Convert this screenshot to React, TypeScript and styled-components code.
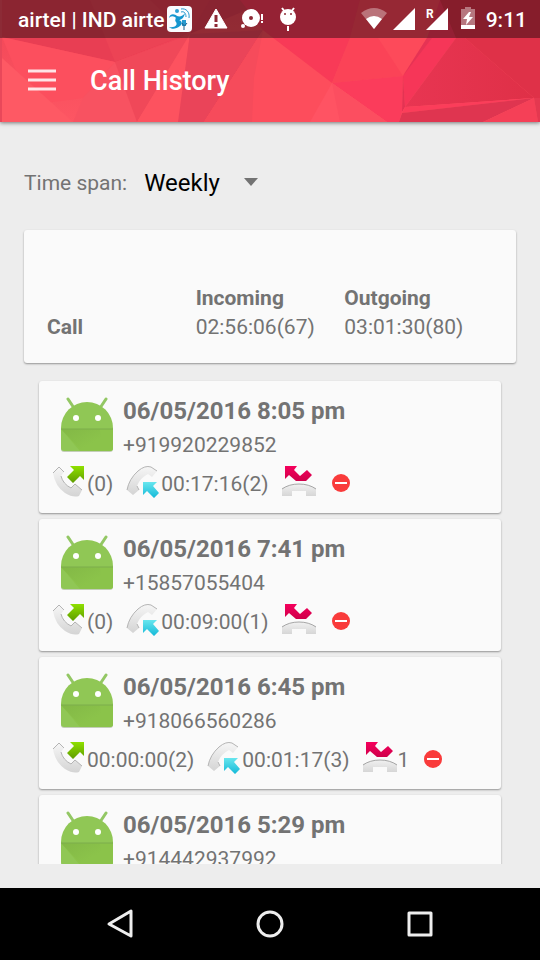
import React from "react";
import styled, { createGlobalStyle } from "styled-components";

const GlobalStyle = createGlobalStyle`
  * { box-sizing: border-box; }
  body {
    margin: 0;
    background: #ededed;
    font-family: Roboto, "Noto Sans", sans-serif;
    color: #737373;
  }
`;

const Screen = styled.div`
  display: flex;
  flex-direction: column;
  height: 100vh;
`;

const AppHeader = styled.header`
  position: relative;
  z-index: 1;
  flex: none;
  color: #fff;
  box-shadow: 0 1px 4px rgba(0, 0, 0, 0.5);
`;

const HeaderArt = styled.svg`
  position: absolute;
  inset: 0;
  width: 100%;
  height: 100%;
`;

const StatusBar = styled.div`
  position: relative;
  display: flex;
  align-items: center;
  justify-content: space-between;
  height: 38px;
  padding: 0 13px 0 18px;
  background: rgba(0, 0, 0, 0.4);
  font-size: 21px;
  line-height: 28px;
  font-weight: 500;
  white-space: nowrap;
`;

const StatusGroup = styled.div`
  display: flex;
  align-items: center;
`;

const StatusIcon = styled.svg<{ $width: number }>`
  flex: none;
  width: ${(p) => p.$width}px;
  height: 38px;
`;

const Carrier = styled.span`
  padding-top: 2px;
`;

const Clock = styled.time`
  margin-left: 4px;
  padding-top: 2px;
`;

const Toolbar = styled.div`
  position: relative;
  display: flex;
  align-items: center;
  gap: 34px;
  height: 84px;
  padding: 0 28px;
`;

const IconButton = styled.button`
  display: flex;
  align-items: center;
  justify-content: center;
  padding: 0;
  border: 0;
  background: none;
  color: inherit;
  cursor: pointer;
`;

const Title = styled.h1`
  margin: 0;
  padding-top: 2px;
  font-size: 27px;
  line-height: 36px;
  font-weight: 500;
`;

const Main = styled.main`
  display: flex;
  flex-direction: column;
  flex: 1;
  min-height: 0;
  padding: 24px;
`;

const SpanRow = styled.div`
  display: flex;
  align-items: center;
  flex: none;
  gap: 17px;
  height: 74px;
  margin-bottom: 10px;
`;

const SpanLabel = styled.label`
  font-size: 21px;
  line-height: 28px;
`;

const SelectBox = styled.div`
  display: grid;
  align-items: center;
  width: 120px;

  & > * { grid-area: 1 / 1; }
`;

const SpanSelect = styled.select`
  appearance: none;
  width: 100%;
  height: 48px;
  padding: 0;
  border: 0;
  background: transparent;
  color: #000;
  font-family: inherit;
  font-size: 24px;
`;

const Arrow = styled.svg`
  justify-self: end;
  width: 20px;
  height: 10px;
  pointer-events: none;
`;

const Card = styled.div`
  border-radius: 3px;
  background: #fafafa;
  box-shadow: 0 1px 2px rgba(0, 0, 0, 0.38);
`;

const SummaryCard = styled(Card)`
  flex: none;
  padding: 54px 23px 21px;
`;

const SummaryTable = styled.table`
  width: 100%;
  table-layout: fixed;
  border-collapse: collapse;
  font-size: 21px;
  line-height: 29px;
  text-align: left;

  th, td { padding: 0; }
  th { font-weight: 700; }
`;

const CallList = styled.ul`
  flex: 1;
  min-height: 0;
  margin: 16px 0 0;
  padding: 2px 15px;
  overflow-y: auto;
  scrollbar-width: none;
  list-style: none;
`;

const CallCard = styled(Card).attrs({ as: "li" })`
  margin-bottom: 6px;
  padding: 12px 12px 6px;
`;

const Contact = styled.div`
  display: flex;
`;

const Avatar = styled.svg`
  flex: none;
  width: 54px;
  height: 60px;
  margin: 4px 9px;
`;

const When = styled.div`
  font-size: 24px;
  line-height: 36px;
  font-weight: 700;
`;

const Phone = styled.div`
  font-size: 21px;
  line-height: 32px;
`;

const Stats = styled.div`
  display: flex;
  align-items: center;
  gap: 12px;
  height: 46px;
  font-size: 21px;
  line-height: 36px;
`;

const Stat = styled.span`
  display: flex;
  align-items: center;
`;

const StatIcon = styled.svg`
  width: 36px;
  height: 36px;
`;

const BlockIcon = styled.svg`
  width: 24px;
  height: 24px;
`;

const NavBar = styled.nav`
  display: flex;
  align-items: center;
  justify-content: center;
  flex: none;
  gap: 102px;
  height: 72px;
  background: #000;
  color: #eee;

  svg { width: 48px; height: 48px; }
`;

const Facets = () => (
  <HeaderArt viewBox="0 0 540 122" preserveAspectRatio="none" aria-hidden="true">
    <defs>
      <linearGradient id="base" x1="0" y1="0" x2="0" y2="1">
        <stop offset="0" stopColor="#f04455" />
        <stop offset="1" stopColor="#fd5663" />
      </linearGradient>
      <linearGradient id="right" x1="0" y1="0" x2="1" y2="0">
        <stop offset="0" stopColor="#e83552" />
        <stop offset="1" stopColor="#df3047" />
      </linearGradient>
    </defs>
    <rect width="540" height="122" fill="url(#base)" />
    <path d="M0 0H250L178 38L115 62L2 37Z" fill="#e83e53" />
    <path d="M90 0H150L187 34L115 62Z" fill="#ec4355" />
    <path d="M2 37L115 62L83 98L30 105Z" fill="#fc4f5e" />
    <path d="M2 58L73 122H2Z" fill="#fe5964" />
    <path d="M115 62L83 98L73 122H138Z" fill="#f85261" />
    <path d="M115 62L190 34L137 122Z" fill="#f04859" />
    <path d="M115 62L180 38L270 0H210L190 34Z" fill="#e53c53" />
    <path d="M190 34L137 122H178Z" fill="#fd525f" />
    <path d="M190 34L263 30L204 122H178Z" fill="#ea4459" />
    <path d="M263 30L204 122H387L332 83Z" fill="#fd4d5c" />
    <path d="M263 30L254 78L252 122H204Z" fill="#f64b5b" />
    <path d="M240 0H360L350 38L332 83L263 30Z" fill="#f83a57" />
    <path d="M350 38L360 0H445L403 76L332 83Z" fill="#fb4357" />
    <path d="M378 38L403 76L427 38Z" fill="#fd4a5a" />
    <path d="M332 83L403 76L402 112L399 122H387Z" fill="#fb3c5b" />
    <path d="M332 83L310 122H387Z" fill="#ff5363" />
    <path d="M332 83L340 122H387Z" fill="#fc4e60" />
    <path d="M403 76L427 38L440 0H480L456 38L405 107Z" fill="#f63658" />
    <path d="M403 76L427 38L432 38Z" fill="#e63354" />
    <path d="M403 76L405 107L402 112Z" fill="#e43253" />
    <path d="M456 38L405 107L534 98L465 38Z" fill="url(#right)" />
    <path d="M456 38L440 0H540V98H534L465 38Z" fill="#df3148" />
    <path d="M405 107L534 98L402 113Z" fill="#fb3d5a" />
    <path d="M402 113L534 98L483 122H399Z" fill="#df3550" />
    <path d="M534 98L483 122H538Z" fill="#f54057" />
    <path d="M534 98H540V122H538Z" fill="#e43850" />
    <path d="M0 0H2V122H0Z" fill="#e9485a" />
  </HeaderArt>
);

const NotificationIcons = () => (
  <>
    <StatusIcon $width={33} viewBox="3 0 33 38" aria-hidden="true">
      <rect x="5" y="6" width="25" height="26" rx="4" fill="#fafcff" />
      <circle cx="15" cy="11" r="2" fill="#2b9fd4" />
      <path d="M7 18C8 13 13 14 15 16C18 17 21 16 23 13C22 18 19 20 17 20C20 21 21 24 18 26C14 29 10 30 7 27C13 28 16 25 14 22C12 20 15 18 13 17Q9 15 7 18Z" fill="#1295cf" />
      <path d="M19 12C22 11 24 13 24 17M19 9C24 8 28 12 27 18" fill="none" stroke="#2499cf" strokeWidth="1" />
      <path d="M22 20V26" stroke="#2499cf" strokeWidth="4" />
      <path d="M20 23Q22 28 25 23M22 26V30" fill="none" stroke="#1d5f8a" />
    </StatusIcon>
    <StatusIcon $width={36} viewBox="0 0 36 38" aria-hidden="true">
      <path d="M18 9L29 28H7Z" fill="#fff" stroke="#fff" strokeLinejoin="round" />
      <path d="M18 15V22M18 24V27" stroke="#8d2834" strokeWidth="3" />
    </StatusIcon>
    <StatusIcon $width={36} viewBox="0 0 36 38" aria-hidden="true">
      <circle cx="17" cy="18" r="9" fill="#fff" />
      <circle cx="17" cy="18" r="2" fill="#8d2834" />
      <circle cx="9" cy="26" r="2" fill="#fff" />
      <path d="M28 14V20M28 21V23" stroke="#fff" strokeWidth="2" />
    </StatusIcon>
    <StatusIcon $width={36} viewBox="0 0 36 38" aria-hidden="true">
      <circle cx="18" cy="17" r="8" fill="#fff" />
      <path d="M12 8L15 12M24 8L21 12M18 26V31" stroke="#fff" strokeWidth="2" />
      <circle cx="15" cy="14" r="1" fill="#8d2834" />
      <circle cx="21" cy="14" r="1" fill="#8d2834" />
    </StatusIcon>
  </>
);

const SystemIcons = () => (
  <>
    <StatusIcon $width={32} viewBox="0 0 32 38" aria-hidden="true">
      <path d="M3 13Q16 3 29 13L16 29Z" fill="#fff" opacity="0.35" />
      <path d="M8 19Q16 13 24 19L16 29Z" fill="#fff" />
    </StatusIcon>
    <StatusIcon $width={30} viewBox="0 0 30 38" aria-hidden="true">
      <path d="M25 8V30H3Z" fill="#fff" />
    </StatusIcon>
    <StatusIcon $width={34} viewBox="0 0 34 38" aria-hidden="true">
      <path d="M28 8V30H6Z" fill="#fff" />
      <text x="6" y="18" fill="#fff" fontSize="12" fontWeight="700">R</text>
    </StatusIcon>
    <StatusIcon $width={28} viewBox="0 0 28 38" aria-hidden="true">
      <path d="M7 9H11V7H17V9H21V26H7Z" fill="#fff" opacity="0.4" />
      <path d="M7 25H21V29H7Z" fill="#fff" />
      <path d="M15 12L9 19H13L12 25L19 17H15L17 12Z" fill="#fff" />
    </StatusIcon>
  </>
);

const IconPaint = ({ id, from, to }: { id: string; from: string; to: string }) => (
  <linearGradient id={id} x1="0" y1="0" x2="0" y2="1">
    <stop offset="0" stopColor={from} />
    <stop offset="1" stopColor={to} />
  </linearGradient>
);

const AndroidAvatar = () => (
  <Avatar viewBox="0 0 54 60" role="img" aria-label="Contact">
    <defs>
      <linearGradient id="fold" x1="0" y1="0" x2="1" y2="1">
        <stop offset="0" stopColor="#7aad42" />
        <stop offset="0.7" stopColor="#8bc34a" />
      </linearGradient>
    </defs>
    <path d="M1 50V52Q1 55 4 55H50Q53 55 53 52V50Z" fill="#c3cdb8" />
    <path d="M8 2L14 11M46 2L40 11" stroke="#93c764" strokeWidth="3" strokeLinecap="round" />
    <path d="M1 31A26 26 0 0 1 53 31V51Q53 54 50 54H4Q1 54 1 51Z" fill="#90c755" />
    <path d="M1 32H53V51Q53 54 50 54H20Z" fill="#8bc34a" />
    <path d="M1 32H40L42 54H22Z" fill="url(#fold)" opacity="0.5" />
    <path d="M1 32H53" stroke="#7cad4d" />
    <circle cx="16" cy="21" r="3" fill="#fff" />
    <circle cx="38" cy="21" r="3" fill="#fff" />
  </Avatar>
);

const IncomingIcon = () => (
  <StatIcon viewBox="0 0 36 36" role="img" aria-label="Incoming">
    <defs>
      <IconPaint id="lime" from="#8fe000" to="#5f9c00" />
      <IconPaint id="handsetA" from="#f6f6f6" to="#d4d4d4" />
    </defs>
    <path d="M2 7L8 1L13 6L10 10Q12 18 20 22L24 18L31 24L28 30Q22 32 14 27Q4 20 2 7Z" fill="url(#handsetA)" />
    <path d="M2 7L8 1L13 6M10 10Q12 18 20 22L24 18L31 24" fill="none" stroke="#b4b4b4" />
    <path d="M19 0H33V14L29 10L22 17L16 11L23 4Z" fill="url(#lime)" />
  </StatIcon>
);

const OutgoingIcon = () => (
  <StatIcon viewBox="0 0 36 36" role="img" aria-label="Outgoing">
    <defs>
      <IconPaint id="cyan" from="#68e6ee" to="#14b9d8" />
      <IconPaint id="handsetB" from="#f6f6f6" to="#d4d4d4" />
    </defs>
    <path d="M2 24Q4 13 13 5Q20 -1 26 1L32 5L27 11L23 8Q15 12 12 20L14 24L8 29Z" fill="url(#handsetB)" />
    <path d="M2 24Q4 13 13 5Q20 -1 26 1L32 5" fill="none" stroke="#b4b4b4" />
    <path d="M12 20L14 24" stroke="#b4b4b4" />
    <path d="M18 16H32L28 20L34 27L29 32L22 25L18 29Z" fill="url(#cyan)" />
  </StatIcon>
);

const MissedIcon = () => (
  <StatIcon viewBox="0 0 36 36" role="img" aria-label="Missed">
    <defs>
      <IconPaint id="crimson" from="#f5005c" to="#cf004a" />
      <IconPaint id="handsetC" from="#f1f1f1" to="#d6d6d6" />
    </defs>
    <path d="M1 30V22Q8 18 18 18Q28 18 35 22V30H25V25H11V30Z" fill="url(#handsetC)" />
    <path d="M1 23Q8 18 18 18Q28 18 35 23" fill="none" stroke="#a6a6a6" />
    <path d="M4 0H16L13 4L19 10L26 4L31 9L25 15H15L8 9L4 13Z" fill="url(#crimson)" />
  </StatIcon>
);

const NoEntryIcon = () => (
  <BlockIcon viewBox="0 0 24 24" aria-hidden="true">
    <circle cx="12" cy="11" r="9" fill="#f93b3b" />
    <rect x="6" y="10" width="12" height="2" fill="#fff" />
  </BlockIcon>
);

type Call = {
  when: string;
  phone: string;
  incoming?: string;
  outgoing?: string;
  missed?: string;
};

const calls: Call[] = [
  { when: "06/05/2016 8:05 pm", phone: "+919920229852", incoming: "(0)", outgoing: "00:17:16(2)" },
  { when: "06/05/2016 7:41 pm", phone: "+15857055404", incoming: "(0)", outgoing: "00:09:00(1)" },
  { when: "06/05/2016 6:45 pm", phone: "+918066560286", incoming: "00:00:00(2)", outgoing: "00:01:17(3)", missed: "1" },
  { when: "06/05/2016 5:29 pm", phone: "+914442937992" },
];

const CallItem = ({ call }: { call: Call }) => (
  <CallCard>
    <Contact>
      <AndroidAvatar />
      <div>
        <When>{call.when}</When>
        <Phone>{call.phone}</Phone>
      </div>
    </Contact>
    <Stats>
      <Stat><IncomingIcon />{call.incoming}</Stat>
      <Stat><OutgoingIcon />{call.outgoing}</Stat>
      <Stat><MissedIcon />{call.missed}</Stat>
      <IconButton type="button" aria-label="Block number"><NoEntryIcon /></IconButton>
    </Stats>
  </CallCard>
);

export default function App() {
  return (
    <Screen>
      <GlobalStyle />
      <AppHeader>
        <Facets />
        <StatusBar>
          <StatusGroup>
            <Carrier>airtel | IND airte</Carrier>
            <NotificationIcons />
          </StatusGroup>
          <StatusGroup>
            <SystemIcons />
            <Clock>9:11</Clock>
          </StatusGroup>
        </StatusBar>
        <Toolbar>
          <IconButton type="button" aria-label="Menu">
            <svg width="28" height="22" viewBox="0 0 28 22" aria-hidden="true">
              <path d="M0 2H28M0 11H28M0 20H28" stroke="#fff" strokeWidth="3" opacity="0.85" />
            </svg>
          </IconButton>
          <Title>Call History</Title>
        </Toolbar>
      </AppHeader>
      <Main>
        <SpanRow>
          <SpanLabel htmlFor="span">Time span:</SpanLabel>
          <SelectBox>
            <SpanSelect id="span" defaultValue="Weekly">
              <option>Daily</option>
              <option>Weekly</option>
              <option>Monthly</option>
            </SpanSelect>
            <Arrow viewBox="0 0 20 10" aria-hidden="true">
              <path d="M0 0H14L7 8Z" fill="#737373" />
            </Arrow>
          </SelectBox>
        </SpanRow>
        <SummaryCard>
          <SummaryTable>
            <thead>
              <tr>
                <td />
                <th scope="col">Incoming</th>
                <th scope="col">Outgoing</th>
              </tr>
            </thead>
            <tbody>
              <tr>
                <th scope="row">Call</th>
                <td>02:56:06(67)</td>
                <td>03:01:30(80)</td>
              </tr>
            </tbody>
          </SummaryTable>
        </SummaryCard>
        <CallList>
          {calls.map((call) => (
            <CallItem key={call.when} call={call} />
          ))}
        </CallList>
      </Main>
      <NavBar aria-label="System">
        <IconButton type="button" aria-label="Back">
          <svg viewBox="0 0 48 48" fill="none" stroke="currentColor" strokeWidth="3" strokeLinejoin="round">
            <path d="M35 11V36L13 24Z" />
          </svg>
        </IconButton>
        <IconButton type="button" aria-label="Home">
          <svg viewBox="0 0 48 48" fill="none" stroke="currentColor" strokeWidth="3">
            <circle cx="24" cy="24" r="12" />
          </svg>
        </IconButton>
        <IconButton type="button" aria-label="Recent apps">
          <svg viewBox="0 0 48 48" fill="none" stroke="currentColor" strokeWidth="3" strokeLinejoin="round">
            <rect x="13" y="13" width="22" height="22" />
          </svg>
        </IconButton>
      </NavBar>
    </Screen>
  );
}
